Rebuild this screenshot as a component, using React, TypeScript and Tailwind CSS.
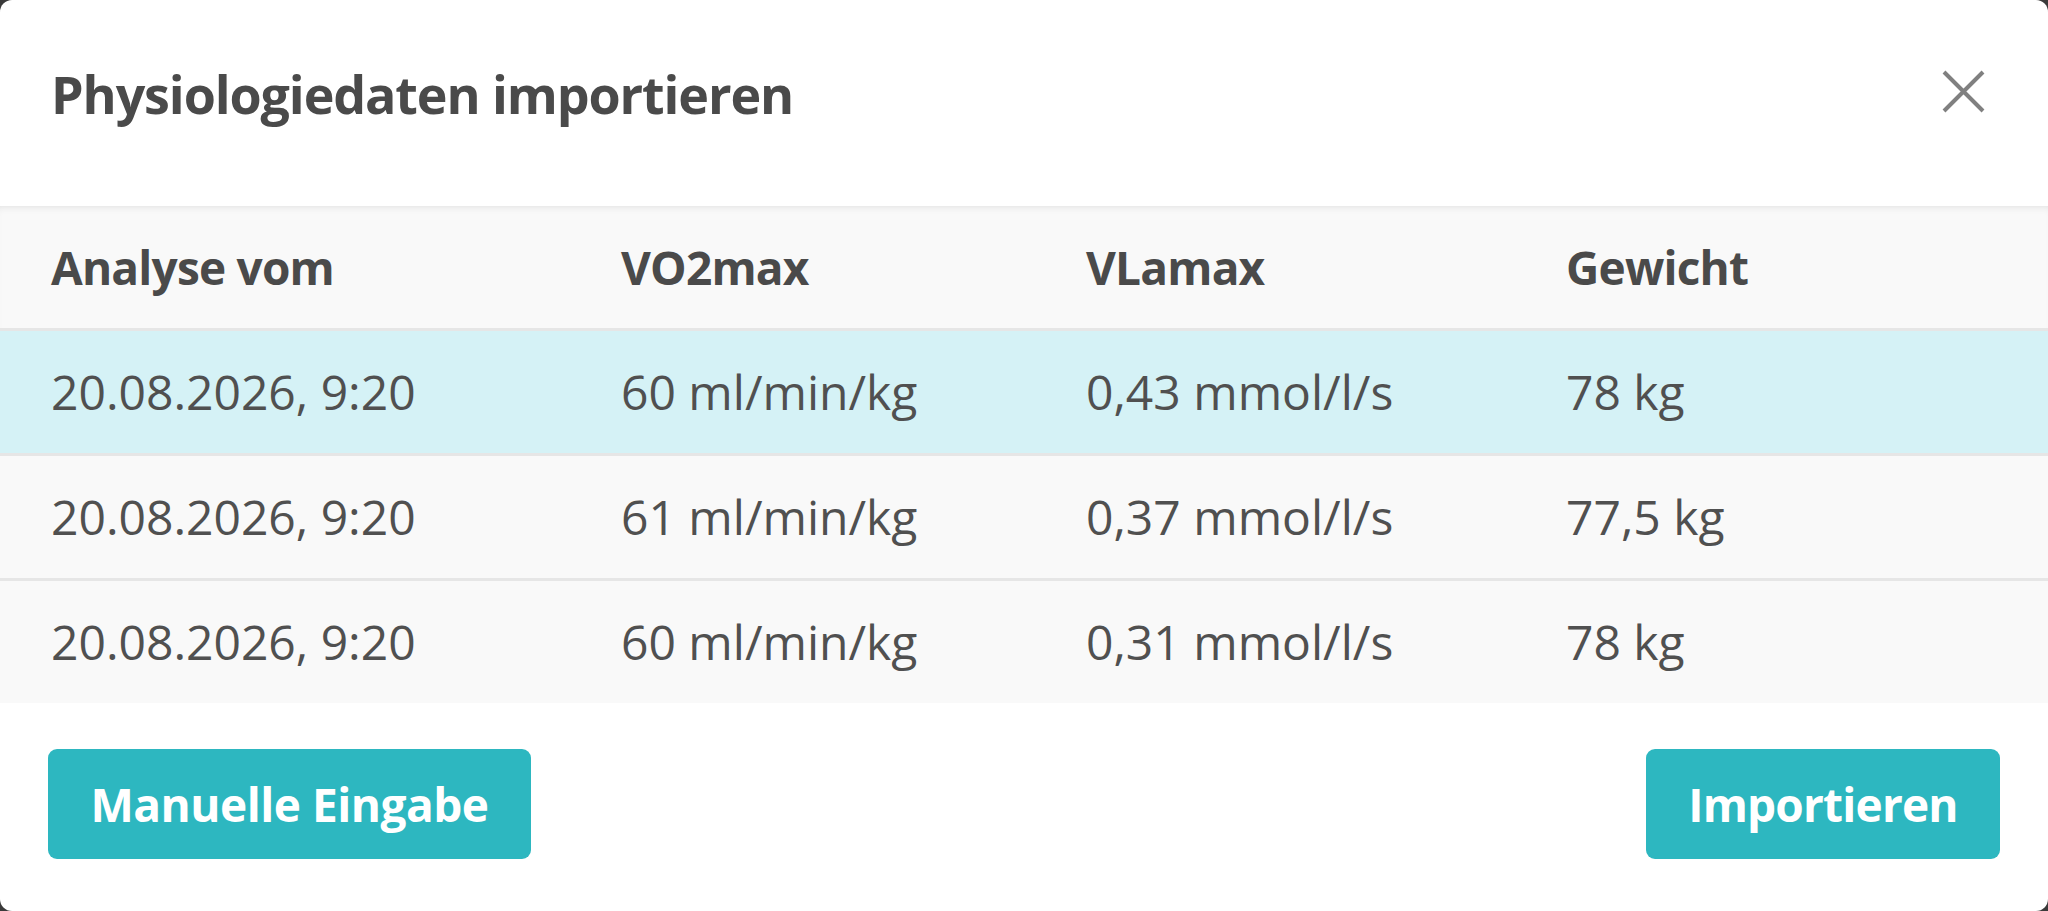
import React from "react";

const rows = [
  { date: "20.08.2026, 9:20", vo2: "60 ml/min/kg", vla: "0,43 mmol/l/s", w: "78 kg", selected: true },
  { date: "20.08.2026, 9:20", vo2: "61 ml/min/kg", vla: "0,37 mmol/l/s", w: "77,5 kg", selected: false },
  { date: "20.08.2026, 9:20", vo2: "60 ml/min/kg", vla: "0,31 mmol/l/s", w: "78 kg", selected: false },
];

export default function App() {
  return (
    <div className="w-[2048px] h-[911px] bg-[#3a3a3a] font-['Open_Sans',sans-serif]">
      <div className="h-full bg-white rounded-[12px] overflow-hidden flex flex-col">
        <div className="h-[206px] shrink-0 flex items-start justify-between pl-[51px] pr-[63px] pt-[60px]">
          <h1 className="text-[52px] leading-[68px] font-bold text-[#4a4a4a] tracking-[-1.1px]">
            Physiologiedaten importieren
          </h1>
          <button className="mt-[10px] w-[43px] h-[43px]" aria-label="Schließen">
            <svg width="43" height="43" viewBox="0 0 43 43">
              <path d="M2 2 L41 41 M41 2 L2 41" stroke="#808080" strokeWidth="4" strokeLinecap="butt" fill="none" />
            </svg>
          </button>
        </div>
        <div className="bg-[#f9f9f9] shadow-[inset_0_6px_8px_-6px_rgba(0,0,0,0.12)]">
          <div className="grid grid-cols-[570px_465px_480px_1fr] pl-[51px] h-[125px] items-center border-b-[3px] border-[#e6e6e6] text-[46px] font-bold text-[#4a4a4a] tracking-[-0.8px]">
            <div>Analyse vom</div>
            <div>VO2max</div>
            <div>VLamax</div>
            <div>Gewicht</div>
          </div>
          {rows.map((r, i) => (
            <div
              key={i}
              className={`grid grid-cols-[570px_465px_480px_1fr] pl-[51px] items-center text-[48px] text-[#505050] tracking-[0px] ${
                r.selected ? "bg-[#d5f2f6]" : "bg-[#f9f9f9]"
              } ${i < rows.length - 1 ? "border-b-[3px] border-[#e6e6e6] h-[125px]" : "h-[122px]"}`}
            >
              <div>{r.date}</div>
              <div>{r.vo2}</div>
              <div>{r.vla}</div>
              <div>{r.w}</div>
            </div>
          ))}
        </div>
        <div className="flex-1 flex items-start justify-between px-[48px] pt-[46px]">
          <button className="w-[483px] h-[110px] rounded-[9px] bg-[#2db7c0] text-white text-[46px] font-bold tracking-[-0.5px]">
            Manuelle Eingabe
          </button>
          <button className="w-[354px] h-[110px] rounded-[9px] bg-[#2db7c0] text-white text-[46px] font-bold tracking-[-0.8px]">
            Importieren
          </button>
        </div>
      </div>
    </div>
  );
}
